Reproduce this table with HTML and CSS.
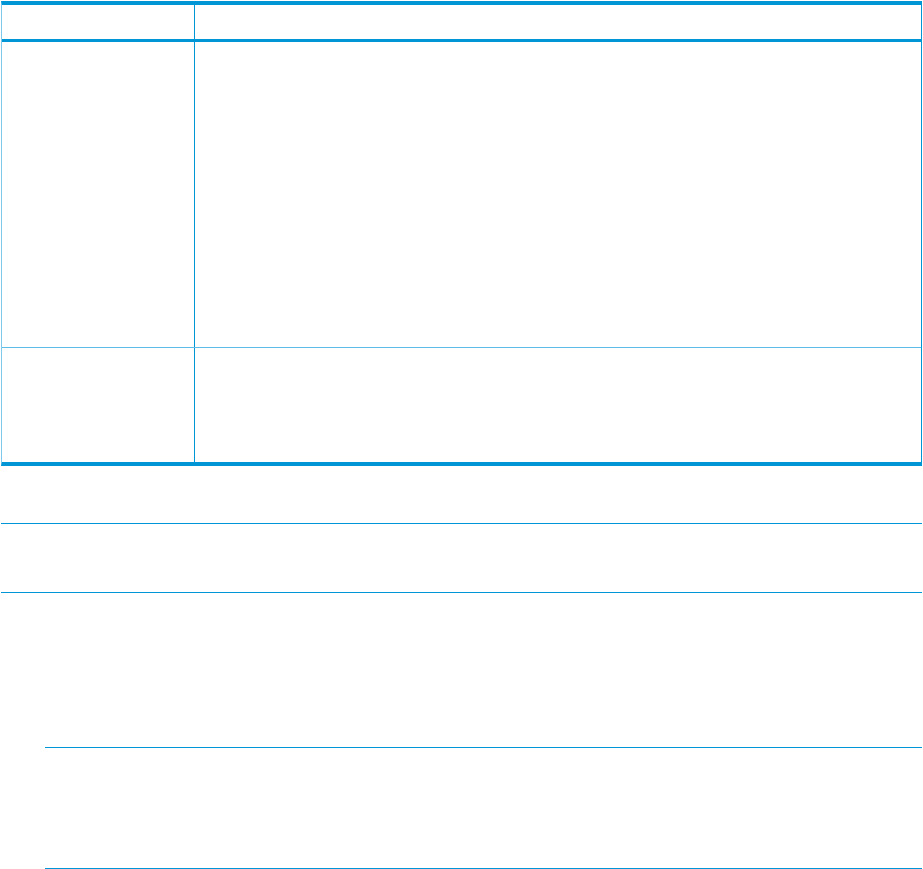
FILE: index.html
```html
<!DOCTYPE html>
<html>
<head>
    <meta charset="utf-8">
    <title>Table</title>
    <link rel="stylesheet" href="styles.css">
</head>
<body>
    <div class="spec-table">
        <div class="spec-row spec-head">
            <div class="spec-cell spec-key"></div>
            <div class="spec-cell spec-val"></div>
        </div>
        <div class="spec-row spec-tall">
            <div class="spec-cell spec-key"></div>
            <div class="spec-cell spec-val"></div>
        </div>
        <div class="spec-row spec-short">
            <div class="spec-cell spec-key"></div>
            <div class="spec-cell spec-val"></div>
        </div>
    </div>

    <div class="note">
        <div class="note-body"></div>
    </div>

    <div class="section">
        <div class="section-body"></div>
        <div class="sub-note">
            <div class="sub-note-body"></div>
        </div>
    </div>
</body>
</html>
```

FILE: styles.css
```css
* {
    margin: 0;
    padding: 0;
    box-sizing: border-box;
}

body {
    background: #fff;
    padding: 1px 1px 0 1px;
    font-family: 'Liberation Sans', Arial, sans-serif;
}

.spec-table {
    border-top: 4px solid #0096d6;
    border-bottom: 4px solid #0096d6;
    border-left: 1px solid #7cc9ec;
    border-right: 1px solid #0096d6;
}

.spec-row {
    display: grid;
    grid-template-columns: 192px 1fr;
}

.spec-val {
    border-left: 1px solid #0096d6;
}

.spec-head {
    height: 37px;
    border-bottom: 3px solid #0096d6;
}

.spec-tall {
    height: 306px;
    border-bottom: 1px solid #5dbde8;
}

.spec-short {
    height: 114px;
}

.note {
    margin-top: 57px;
    border-top: 1px solid #0096d6;
    border-bottom: 1px solid #0096d6;
}

.note-body {
    height: 68px;
}

.section-body {
    height: 154px;
}

.sub-note {
    margin-left: 44px;
    border-top: 1px solid #0096d6;
    border-bottom: 1px solid #0096d6;
}

.sub-note-body {
    height: 120px;
}
```
